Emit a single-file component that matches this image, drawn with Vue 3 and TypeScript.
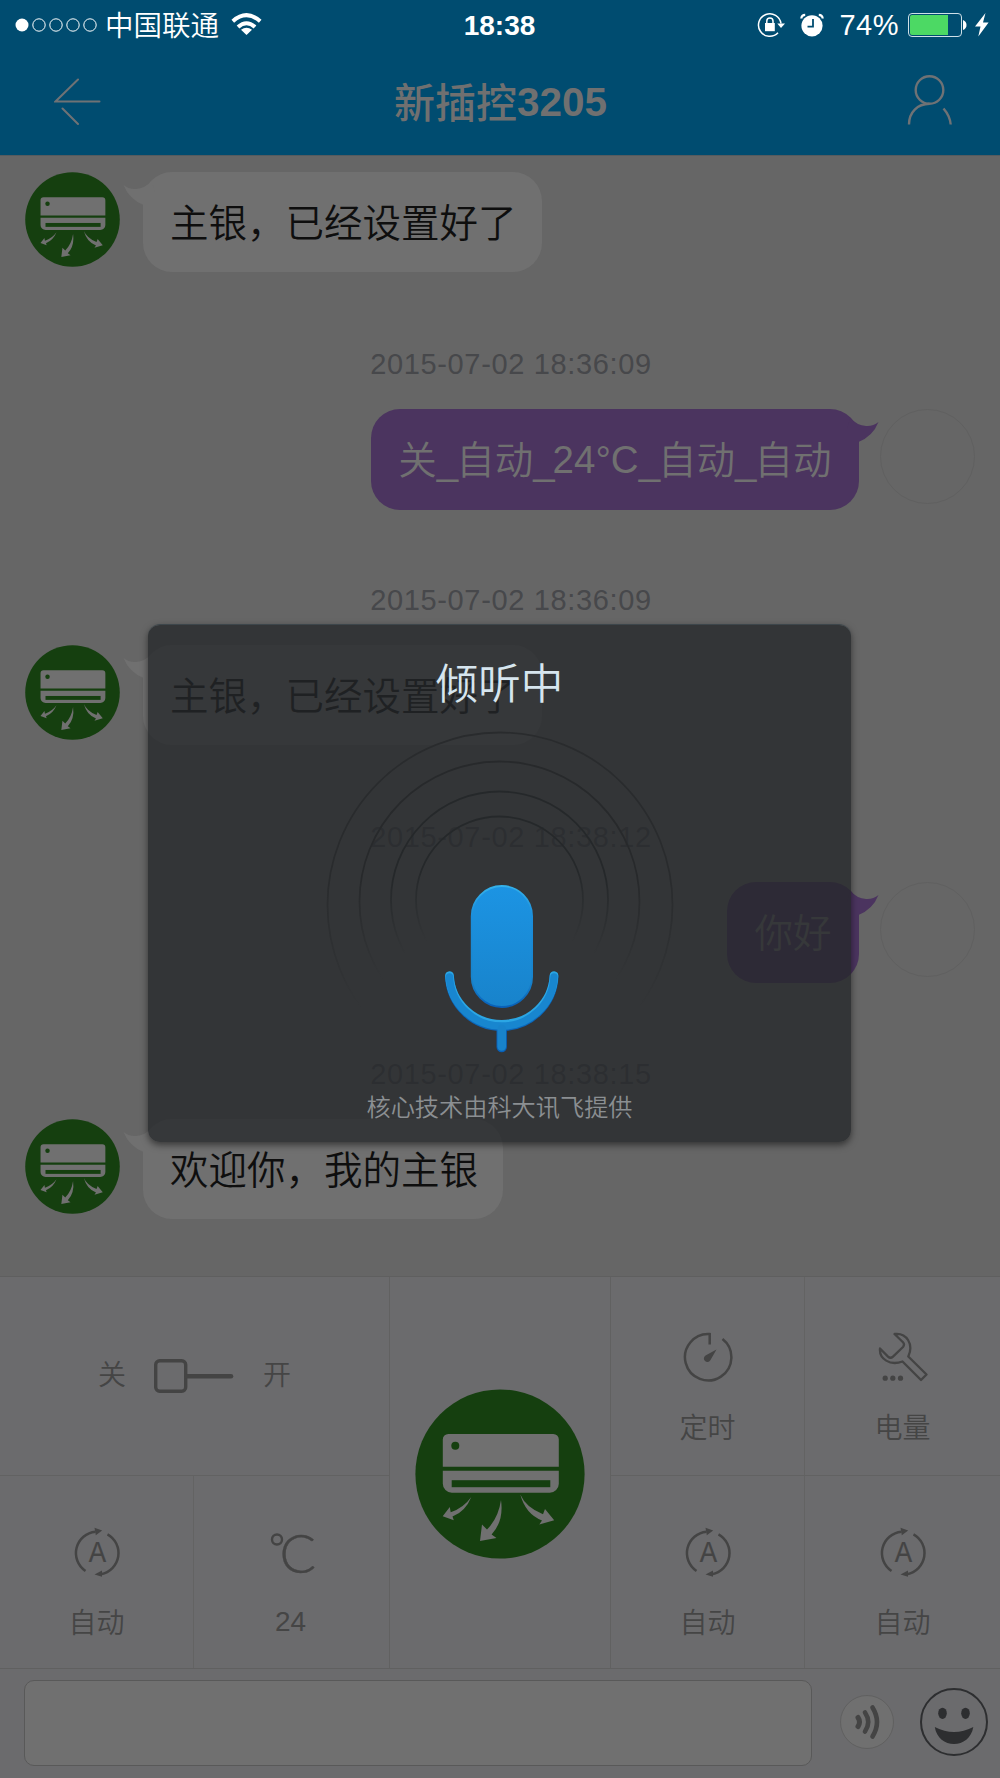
<script setup lang="ts">
import { computed, defineComponent, h } from 'vue'

interface Message {
  time?: string
  text: string
  mine: boolean
}

const messages: Message[] = [
  { text: '主银，已经设置好了', mine: false },
  { time: '2015-07-02 18:36:09', text: '关_自动_24°C_自动_自动', mine: true },
  { time: '2015-07-02 18:36:09', text: '主银，已经设置好了', mine: false },
  { time: '2015-07-02 18:38:12', text: '你好', mine: true },
  { time: '2015-07-02 18:38:15', text: '欢迎你，我的主银', mine: false },
]

const pieces = (text: string) => text.split(/(_|24°C)/)
const battery = 74
const batteryWidth = computed(() => `${(battery / 100) * 52}px`)

// Wall-mounted air conditioner badge, shared by the avatars and the main button
const AcBadge = defineComponent({
  render: () =>
    h('svg', { viewBox: '0 0 170 170' }, [
      h('circle', { cx: 85, cy: 85, r: 84.6, fill: '#153f0f' }),
      h('path', {
        fill: '#707070',
        d: 'M27.8 77.7V50.5a5.5 5.5 0 0 1 5.5-5.5h105a5.5 5.5 0 0 1 5.5 5.5v27.2zM27.8 81.7h116v13a9 9 0 0 1-9 9h-98a9 9 0 0 1-9-9z',
      }),
      h('circle', { cx: 40.3, cy: 56.7, r: 4, fill: '#153f0f' }),
      h('rect', { x: 36.7, y: 91.2, width: 98.6, height: 7, fill: '#153f0f' }),
      h('path', {
        fill: '#707070',
        d: 'M56.3 108Q48.500 119 35.700 123.200L34.800 118 27.700 127.200 38.800 131.200 37.500 127.600Q50.500 122.500 56.300 108zM86 111Q83.500 129 72 140.500L67 135.500 65 152 81.500 149 76.600 145.500Q89 132 86 111zM105.300 105.500Q111 118.500 128 125.200L130 120 139.200 131.300 124.300 135.500 127 131.500Q110.500 125 105.300 105.500z',
      }),
    ]),
})

const AutoIcon = defineComponent({
  render: () =>
    h('svg', { width: 50, height: 50, viewBox: '0 0 50 50' }, [
      h('path', {
        d: 'M13.500 44A21.500 21.500 0 0 1 23.500 4.700M35.500 7.300A21.500 21.500 0 0 1 29 47.200',
        fill: 'none',
        stroke: '#444',
        'stroke-width': 2.5,
      }),
      h('path', { d: 'M22.500 0.800L30.200 3.500 23.800 8.300zM30 43.500L22.500 47.500 30 49.800z', fill: '#444' }),
      h('text', {
        x: 16.8,
        y: 35.2,
        textLength: 17.4,
        lengthAdjust: 'spacingAndGlyphs',
        'font-size': 30,
        'font-family': 'Liberation Sans, sans-serif',
        fill: '#444',
        stroke: '#444',
        'stroke-width': 0.2,
      }, 'A'),
    ]),
})
</script>

<template>
  <div class="screen">
    <header class="head">
      <div class="status">
        <div class="status-left">
          <svg class="dots" width="83" height="16" viewBox="0 0 83 16" fill="none" stroke="#fff" stroke-width="1">
            <circle cx="7" cy="8" r="6.5" fill="#fff" stroke="none" />
            <circle v-for="i in 4" :key="i" :cx="7 + i * 17" cy="8" r="6.2" />
          </svg>
          <span class="carrier">中国联通</span>
          <svg class="wifi" width="31" height="23" viewBox="0 0 31 23" fill="none" stroke="#fff" stroke-width="4">
            <path d="M1.800 8.200Q15.500-3.800 29.200 8.200" />
            <path d="M7 14Q15.500 6.500 24 14" />
            <path d="M15.500 22L10 16.800Q15.500 12.800 21 16.800z" fill="#fff" stroke="none" />
          </svg>
        </div>
        <span class="clock">18:38</span>
        <div class="status-right">
          <svg width="28" height="26" viewBox="0 0 28 26">
            <path d="M24 11.500A11.300 11.300 0 1 0 21 20.800" fill="none" stroke="#fff" stroke-width="1.500" />
            <path d="M20.300 11.500h7.700L24 16z" fill="#fff" />
            <rect x="8" y="11" width="9.800" height="8.200" fill="#fff" />
            <path d="M9.800 11.500V9a3.100 3.100 0 0 1 6.200 0v2.500" fill="none" stroke="#fff" stroke-width="1.500" />
          </svg>
          <svg class="alarm" width="24" height="24" viewBox="0 0 24 24">
            <circle cx="12" cy="12.800" r="10.600" fill="#fff" />
            <path d="M1.300 5.500A4 4 0 0 1 5.200 1.800M22.700 5.500A4 4 0 0 0 18.800 1.800" fill="none" stroke="#fff" stroke-width="2.200" />
            <path d="M13 6v7.700H7.500" fill="none" stroke="#004c70" stroke-width="1.800" />
          </svg>
          <span class="percent">{{ battery }}%</span>
          <div class="battery"><i :style="{ width: batteryWidth }"></i></div>
          <svg class="cap" width="4" height="10" viewBox="0 0 4 10"><path d="M0 0Q3.500 1.500 3.500 5T0 10z" fill="#fff" /></svg>
          <svg class="bolt" width="14" height="24" viewBox="0 0 14 24"><path d="M10.500 0L0 13.500h5.500L3.300 23.500 13.600 9.500H8z" fill="#fff" /></svg>
        </div>
      </div>
      <div class="nav">
        <svg width="48" height="50" viewBox="0 0 48 50" fill="none" stroke="#6f7275" stroke-width="2" stroke-linecap="round">
          <path d="M45.500 24.500H1.500L24 2.500M8.500 31.500L24 47" />
        </svg>
        <h1><span>新插控</span><b>3205</b></h1>
        <svg class="person" width="46" height="50" viewBox="0 0 46 50" fill="none" stroke="#6f7275" stroke-width="2.400">
          <circle cx="22.500" cy="15" r="13.800" />
          <path d="M2 49.500C2 37 10.500 29 22.500 28.800" />
          <path d="M36.500 33.500Q43 41 43.700 49.500" />
        </svg>
      </div>
    </header>

    <main class="chat">
      <section v-for="(m, i) in messages" :key="i" class="entry" :class="{ mine: m.mine, first: !m.time }">
        <time v-if="m.time">{{ m.time }}</time>
        <div class="row">
          <AcBadge v-if="!m.mine" class="avatar" />
          <div v-else class="avatar blank"></div>
          <div class="bubble">
            <svg class="tail" width="32" height="36" viewBox="0 0 32 36">
              <path d="M0.500 13Q6 17.500 13 17Q22 16.500 28.500 9L32 20V34H20.500V33Q6 27 0.500 13z" />
            </svg>
            <span v-for="(p, k) in pieces(m.text)" :key="k" :class="{ under: p === '_', latin: p === '24°C' }">{{ p }}</span>
          </div>
        </div>
      </section>
    </main>

    <section class="panel">
      <div class="side">
        <div class="cell switch">
          <span>关</span>
          <svg width="80" height="34" viewBox="0 0 80 34" fill="none" stroke="#444">
            <rect x="1.700" y="1.700" width="30" height="30.600" rx="4" stroke-width="3.400" />
            <path d="M33 17.200H77" stroke-width="4.600" stroke-linecap="round" />
          </svg>
          <span>开</span>
        </div>
        <div class="pair left">
          <div class="cell low">
            <AutoIcon />
            <span>自动</span>
          </div>
          <div class="cell low temp">
            <svg width="50" height="50" viewBox="0 0 50 50">
              <circle cx="11" cy="12.500" r="5" fill="none" stroke="#444" stroke-width="2.400" />
              <text class="degree" x="13.500" y="45.500">C</text>
            </svg>
            <span>24</span>
          </div>
        </div>
      </div>
      <div class="center"><AcBadge class="main-button" /></div>
      <div class="side">
        <div class="pair top">
          <div class="cell">
            <svg width="50" height="50" viewBox="0 0 50 50" fill="none" stroke="#444" stroke-width="2.500">
              <path d="M26.700 12.500V2.100A23.200 23.200 0 1 0 39.500 7" />
              <path d="M33.500 17.500L22.500 23.500a3.500 3.500 0 1 0 5 4.500z" fill="#444" stroke="none" />
            </svg>
            <span>定时</span>
          </div>
          <div class="cell">
            <svg width="50" height="50" viewBox="0 0 50 50" fill="none" stroke="#444" stroke-width="2.300" stroke-linejoin="round">
              <path d="M16.500 2C28.500 0.500 36 12 30.300 24.500L48.500 42.500 43 48 24.500 29.500C12 34 1 27 2 16.500L10 24.600Q12.500 27 15 24.600L25 15Q27 12.500 25 10.300z" />
              <g fill="#444" stroke="none"><circle cx="7.200" cy="46.200" r="2.600" /><circle cx="14.800" cy="46.200" r="2.600" /><circle cx="22.500" cy="46.200" r="2.600" /></g>
            </svg>
            <span>电量</span>
          </div>
        </div>
        <div class="pair">
          <div v-for="n in 2" :key="n" class="cell low">
            <AutoIcon />
            <span>自动</span>
          </div>
        </div>
      </div>
    </section>

    <footer class="composer">
      <div class="field"></div>
      <svg class="voice" width="54" height="54" viewBox="0 0 54 54" fill="none">
        <circle cx="27" cy="27" r="26.500" fill="#707070" stroke="#606060" />
        <g stroke="#444" stroke-width="4.600" stroke-linecap="round">
          <path d="M18 22.500Q21 27 18 31.500" stroke-width="5" />
          <path d="M25 17.500Q31.500 27 25 36.500" />
          <path d="M32.500 12.500Q41.500 27 32.500 41.500" />
        </g>
      </svg>
      <svg class="smile" width="68" height="68" viewBox="0 0 68 68">
        <circle cx="34" cy="34" r="33" fill="none" stroke="#2d2e30" stroke-width="2" />
        <ellipse cx="22.500" cy="25.300" rx="4.300" ry="5.600" fill="#2d2e30" />
        <ellipse cx="45.500" cy="25.300" rx="4.300" ry="5.600" fill="#2d2e30" />
        <path d="M14.800 39Q34 49 53.300 39C51.500 50 43 56 34 56S16.500 50 14.800 39z" fill="#2d2e30" />
      </svg>
    </footer>

    <div class="listening" role="dialog">
      <h2>倾听中</h2>
      <svg class="mic" width="360" height="330" viewBox="320 728 360 330" fill="none">
        <defs>
          <linearGradient id="ring1" gradientUnits="userSpaceOnUse" x1="0" y1="880" x2="0" y2="1010"><stop stop-color="#292b2d" /><stop offset="1" stop-color="#292b2d" stop-opacity="0" /></linearGradient>
          <linearGradient id="ring2" gradientUnits="userSpaceOnUse" x1="0" y1="880" x2="0" y2="980"><stop stop-color="#27292b" /><stop offset="1" stop-color="#27292b" stop-opacity="0" /></linearGradient>
          <linearGradient id="ring3" gradientUnits="userSpaceOnUse" x1="0" y1="880" x2="0" y2="955"><stop stop-color="#25282a" /><stop offset="1" stop-color="#25282a" stop-opacity="0" /></linearGradient>
          <linearGradient id="ring4" gradientUnits="userSpaceOnUse" x1="0" y1="870" x2="0" y2="942"><stop stop-color="#25282a" /><stop offset="1" stop-color="#25282a" stop-opacity="0" /></linearGradient>
          <linearGradient id="body" x1="0" y1="0" x2="0" y2="1"><stop stop-color="#1c94e3" /><stop offset="1" stop-color="#1883cb" /></linearGradient>
          <linearGradient id="rim" x1="0" y1="0" x2="0" y2="1"><stop stop-color="#35b1e9" /><stop offset=".25" stop-color="#1b8edb" /><stop offset=".78" stop-color="#1883cb" /><stop offset="1" stop-color="#0860b8" /></linearGradient>
        </defs>
        <g stroke-width="1.800">
          <circle cx="500" cy="905" r="172.500" stroke="url(#ring1)" />
          <circle cx="499.500" cy="901.500" r="140" stroke="url(#ring2)" />
          <circle cx="499.500" cy="900" r="108.500" stroke="url(#ring3)" />
          <circle cx="499.500" cy="900" r="83.500" stroke="url(#ring4)" />
        </g>
        <rect x="471.700" y="886" width="60.400" height="121" rx="30.200" fill="url(#body)" stroke="url(#rim)" stroke-width="1.800" />
        <path d="M501.700 1029V1047" stroke="#0860b8" stroke-width="10.400" stroke-linecap="round" />
        <path d="M449.500 976.500A52.300 52.300 0 0 0 554 976.500" stroke="#0b66bb" stroke-width="9" stroke-linecap="round" />
        <path d="M449.500 975.500A52.300 51 0 0 0 554 975.500" stroke="#2ba6e4" stroke-width="8.600" stroke-linecap="round" />
        <path d="M449.500 977A52.300 51.300 0 0 0 554 977" stroke="#1886cf" stroke-width="7.400" stroke-linecap="round" />
        <path d="M501.700 1029V1046.500" stroke="#1883cb" stroke-width="8.600" stroke-linecap="round" />
      </svg>
      <p>核心技术由科大讯飞提供</p>
    </div>
  </div>
</template>

<style>
body {
  margin: 0;
}
</style>

<style scoped>
.screen {
  position: relative;
  width: 1000px;
  height: 1778px;
  display: flex;
  flex-direction: column;
  overflow: hidden;
  background: #666;
  font-family: 'Liberation Sans', 'Noto Sans CJK SC', sans-serif;
  font-weight: 350;
}
svg {
  display: block;
  flex: none;
}
.head {
  height: 156px;
  background: #004c70;
  box-sizing: border-box;
  border-bottom: 1px solid #555b5f;
  flex: none;
}
.status {
  height: 50px;
  display: grid;
  grid-template-columns: 1fr auto 1fr;
  align-items: center;
  color: #fff;
  font-size: 29px;
}
.status-left,
.status-right {
  display: flex;
  align-items: center;
  height: 50px;
}
.status-left {
  padding-left: 15px;
}
.carrier {
  margin-left: 7px;
  padding-top: 2px;
  font-size: 28.5px;
  line-height: 50px;
}
.wifi {
  margin-left: 12px;
  margin-top: -2px;
}
.clock {
  font-weight: 700;
  font-size: 28px;
  padding: 1px 1px 0 0;
}
.status-right {
  justify-content: flex-end;
  padding-right: 11px;
}
.alarm {
  margin-left: 15px;
}
.percent {
  margin: 1px 0 0 15px;
  letter-spacing: 0.5px;
}
.battery {
  width: 54px;
  height: 24px;
  margin-left: 9px;
  padding: 1px;
  box-sizing: border-box;
  border: 1px solid #cfe0e8;
  border-radius: 4px;
}
.battery i {
  display: block;
  height: 100%;
  background: #4cd964;
  border-radius: 2px 0 0 2px;
}
.cap {
  margin-left: 1px;
}
.bolt {
  margin-left: 8px;
}
.nav {
  height: 104px;
  box-sizing: border-box;
  padding: 0 47px 0 54px;
  display: flex;
  justify-content: space-between;
  align-items: center;
}
.nav h1 {
  display: flex;
  margin: 0 8px 0 0;
  font-size: 41px;
  font-weight: 400;
  line-height: 60px;
  color: #707070;
}
.nav h1 span {
  padding-top: 3px;
  font-weight: 500;
}
.nav h1 b {
  font-weight: 700;
  font-size: 40.5px;
  padding-top: 1px;
}
.person {
  margin-top: -5px;
}
.chat {
  height: 1120px;
  box-sizing: border-box;
  padding-top: 16px;
  overflow: hidden;
  flex: none;
}
.entry {
  height: 236.8px;
}
.entry.first {
  height: 171.5px;
}
time {
  display: block;
  height: 65px;
  line-height: 40px;
  padding-left: 22px;
  text-align: center;
  font-size: 29px;
  letter-spacing: 0.65px;
  color: #47484b;
}
.row {
  display: flex;
  align-items: flex-start;
  padding: 0 25px;
  gap: 23px;
}
.mine .row {
  flex-direction: row-reverse;
  gap: 21px;
}
.avatar {
  width: 95px;
  height: 95px;
}
.avatar.blank {
  box-sizing: border-box;
  border: 1px solid #606060;
  border-radius: 50%;
}
.bubble {
  position: relative;
  height: 100px;
  box-sizing: border-box;
  padding: 0 25px 0 27px;
  border-radius: 29px;
  background: #707070;
  color: #0e0e0e;
  font-size: 38.5px;
  line-height: 103px;
  white-space: nowrap;
}
.mine .bubble {
  height: 101px;
  padding: 0 27.500px;
  background: #4b345f;
  color: #707070;
}
.under {
  letter-spacing: -2px;
}
.latin {
  position: relative;
  top: -1px;
}
.tail {
  position: absolute;
  left: -20px;
  top: 0;
  fill: #707070;
}
.mine .tail {
  left: auto;
  right: -20px;
  transform: scaleX(-1);
  fill: #4b345f;
}
.panel {
  height: 392px;
  box-sizing: border-box;
  border-top: 1px solid #5f5f5f;
  background: #6b6b6d;
  display: grid;
  grid-template-columns: 390px 221px 389px;
  color: #454545;
  flex: none;
}
.side {
  display: flex;
  flex-direction: column;
}
.center {
  box-sizing: border-box;
  display: flex;
  justify-content: center;
  align-items: center;
  padding-top: 3px;
  border-left: 1px solid #616161;
  border-right: 1px solid #616161;
  margin-left: -1px;
}
.main-button {
  width: 170px;
  height: 170px;
}
.cell {
  flex: 1;
  display: flex;
  flex-direction: column;
  align-items: center;
  padding-top: 55px;
  box-sizing: border-box;
  font-size: 28px;
  line-height: 40px;
}
.cell > span {
  margin-top: 27px;
}
.cell.low {
  padding-top: 51px;
}
.cell.low > span {
  margin-top: 27px;
}
.cell.temp > span {
  margin-top: 25px;
}
.pair {
  display: grid;
  grid-template-columns: 193px 1fr;
  height: 192px;
}
.pair.left .temp {
  padding-right: 3px;
}
.pair .cell + .cell {
  border-left: 1px solid #636363;
}
.pair.top,
.cell.switch {
  height: 199px;
  box-sizing: border-box;
  border-bottom: 1px solid #626262;
  flex: none;
}
.cell.switch {
  flex-direction: row;
  padding: 0 0 0 98px;
}
.cell.switch > span {
  margin: -1px 28px 0 0;
}
.cell.switch svg {
  margin-right: 29px;
}
.degree {
  font-family: Lato, sans-serif;
  font-weight: 300;
  font-size: 54px;
  fill: #444;
  stroke: #444;
  stroke-width: 0.4px;
}
.composer {
  height: 110px;
  box-sizing: border-box;
  border-top: 1px solid #606060;
  background: #6b6b6d;
  display: flex;
  align-items: center;
  padding: 0 12px 3px 24px;
  flex: none;
}
.field {
  width: 788px;
  height: 86px;
  margin-top: 2px;
  box-sizing: border-box;
  border: 1px solid #595959;
  border-radius: 10px;
  background: #707070;
}
.voice {
  margin-left: 28px;
}
.smile {
  margin-left: 26px;
}
.listening {
  position: absolute;
  left: 148px;
  top: 624px;
  width: 703px;
  height: 518px;
  box-sizing: border-box;
  border-radius: 12px;
  border-top: 1px solid #3d464b;
  background: rgba(36, 39, 42, 0.77);
  background-clip: padding-box;
  box-shadow: 0 3px 7px rgba(0, 0, 0, 0.5);
  display: flex;
  flex-direction: column;
  align-items: center;
}
.listening h2 {
  margin: 30px 0 0;
  font-size: 42.5px;
  line-height: 60px;
  font-weight: 350;
  color: #d6e5ee;
}
.mic {
  margin-top: 13px;
}
.listening p {
  margin: 30px 0 0;
  font-size: 24.2px;
  line-height: 40px;
  color: #8b8f92;
}
</style>
